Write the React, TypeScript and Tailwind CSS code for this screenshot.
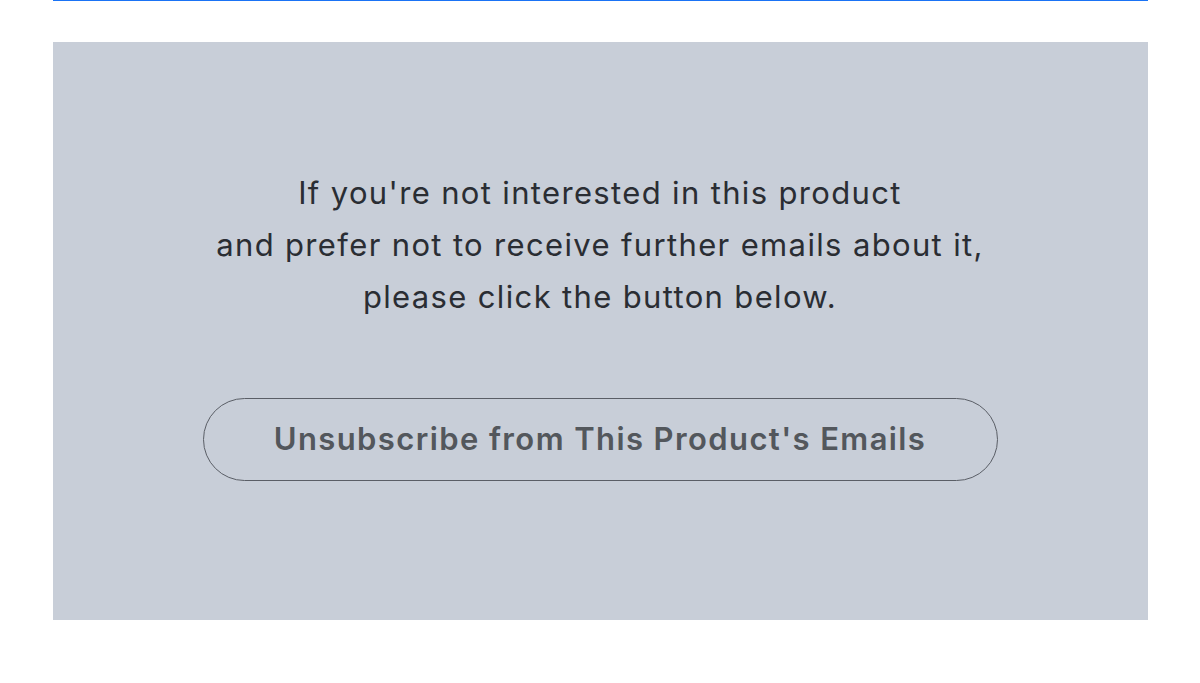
export default function App() {
  return (
    <div className="min-h-screen bg-white" style={{ fontFamily: 'Inter, "Noto Sans", sans-serif' }}>
      <div className="mx-auto w-[1095px]">
        <div className="h-px bg-[#1a73f5]" />
        <div className="mt-[41px] bg-[#c8ced8] pt-[125px] pb-[139px] flex flex-col items-center">
          <p className="text-center text-[31px] leading-[52px] tracking-[1.35px] text-[#2a2d33]">
            If you're not interested in this product
            <br />
            and prefer not to receive further emails about it,
            <br />
            please click the button below.
          </p>
          <button className="mt-[75px] w-[795px] h-[83px] rounded-full border border-[#5a5e66] text-[31px] font-semibold tracking-[1.4px] text-[#53575c]">
            Unsubscribe from This Product's Emails
          </button>
        </div>
      </div>
    </div>
  )
}
